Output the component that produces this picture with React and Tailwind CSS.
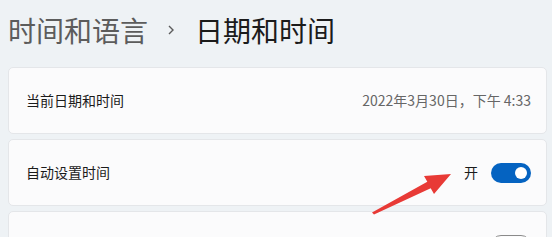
import React from "react";

const cjk = { fontFamily: '"Noto Sans CJK SC", "Noto Sans", sans-serif' };

const Toggle = ({ on }) =>
    on ? (
        <div className="w-10 h-5 rounded-full bg-[#0563c1] flex items-center justify-end pr-[4px]">
            <div className="w-3 h-3 rounded-full bg-white" />
        </div>
    ) : (
        <div className="w-10 h-5 rounded-full border border-[#8a8a8a] flex items-center pl-[4px]">
            <div className="w-3 h-3 rounded-full bg-[#5c5c5c]" />
        </div>
    );

const Card = ({ children }) => (
    <div className="h-[67px] shrink-0 flex items-center justify-between pl-[17px] pr-[15px] bg-[#fbfbfc] border border-[#e4e6e9] rounded-[5px]">
        {children}
    </div>
);

const App = () => {
    return (
        <div className="relative w-[552px] h-[237px] overflow-hidden bg-[#eef2f5]" style={cjk}>
            {/* breadcrumb title */}
            <div className="h-[67px] pt-[12px] pl-2 flex items-start">
                <div className="flex items-center h-9">
                    <span className="text-[28px] leading-9 text-[#5c5c5c]">时间和语言</span>
                    <svg className="ml-[20px] mr-[21px]" width="6" height="10" viewBox="0 0 6 10">
                        <path d="M1 1l4 4-4 4" fill="none" stroke="#5c5c5c" strokeWidth="1.4" />
                    </svg>
                    <span className="text-[28px] leading-9 text-[#1b1b1b]">日期和时间</span>
                </div>
            </div>

            {/* settings rows */}
            <div className="flex flex-col gap-[5px] ml-2 mr-[5px]">
                <Card>
                    <span className="text-[14px] text-[#1b1b1b]">当前日期和时间</span>
                    <span className="text-[14px] text-[#666666]">2022年3月30日，下午 4:33</span>
                </Card>
                <Card>
                    <span className="text-[14px] text-[#1b1b1b]">自动设置时间</span>
                    <div className="flex items-center gap-[13px]">
                        <span className="text-[14px] text-[#1b1b1b]">开</span>
                        <Toggle on />
                    </div>
                </Card>
                {/* next row, only its top edge is in view */}
                <Card>
                    <span />
                    <Toggle on={false} />
                </Card>
            </div>

            {/* red annotation arrow */}
            <svg className="absolute left-0 top-0" width="552" height="237" viewBox="0 0 552 237">
                <polygon
                    points="372,212.5 427.3,181.8 424,176 451,174 434,194 430.7,188.2 374,214.5"
                    fill="#e83a36"
                />
            </svg>
        </div>
    );
};

export default App;
